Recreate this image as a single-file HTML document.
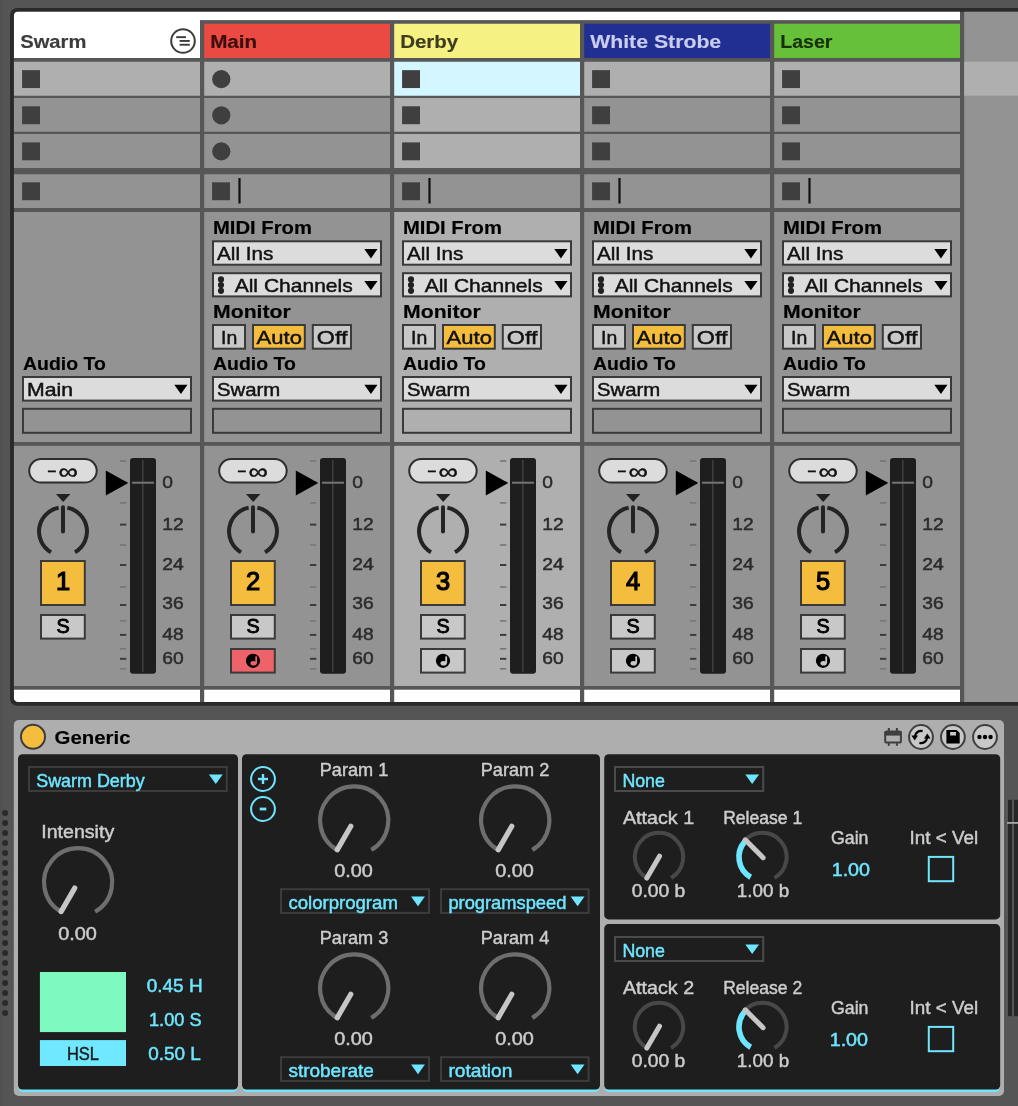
<!DOCTYPE html>
<html lang="en"><head><meta charset="utf-8"><title>Live Set</title>
<style>
html,body{margin:0;padding:0;}
body{width:1018px;height:1106px;overflow:hidden;background:#555555;}
svg{display:block;font-family:"Liberation Sans",sans-serif;will-change:transform;}
</style></head><body>
<svg width="1018" height="1106" viewBox="0 0 1018 1106">
<rect x="0" y="0" width="3.4" height="1106" fill="#515151"/>
<rect x="10" y="8" width="1030" height="697.8" fill="#2a2a2a" rx="7"/>
<clipPath id="inner"><rect x="13.75" y="11.5" width="1030" height="690.6" rx="4.5"/></clipPath>
<g clip-path="url(#inner)">
<rect x="13.75" y="11.5" width="1010" height="690.6" fill="#575757"/>
<rect x="200" y="11.5" width="760" height="8.6" fill="#ffffff"/>
<rect x="964.2" y="11.5" width="60" height="690.6" fill="#939393"/>
<rect x="964.2" y="61.75" width="60" height="34" fill="#afafaf"/>
<rect x="13.75" y="11.5" width="186.25" height="46.5" fill="#ffffff"/>
<rect x="13.75" y="61.75" width="186.25" height="34" fill="#afafaf"/>
<rect x="13.75" y="98" width="186.25" height="33.75" fill="#939393"/>
<rect x="13.75" y="134" width="186.25" height="34" fill="#939393"/>
<rect x="13.75" y="174.25" width="186.25" height="33.75" fill="#939393"/>
<rect x="13.75" y="212" width="186.25" height="230" fill="#939393"/>
<rect x="13.75" y="445.8" width="186.25" height="240.2" fill="#939393"/>
<rect x="13.75" y="689.7" width="186.25" height="13" fill="#ffffff"/>
<rect x="204.2" y="23.75" width="185.8" height="34.25" fill="#ea4a42"/>
<rect x="204.2" y="61.75" width="185.8" height="34" fill="#afafaf"/>
<rect x="204.2" y="98" width="185.8" height="33.75" fill="#939393"/>
<rect x="204.2" y="134" width="185.8" height="34" fill="#939393"/>
<rect x="204.2" y="174.25" width="185.8" height="33.75" fill="#939393"/>
<rect x="204.2" y="212" width="185.8" height="230" fill="#939393"/>
<rect x="204.2" y="445.8" width="185.8" height="240.2" fill="#939393"/>
<rect x="204.2" y="689.7" width="185.8" height="13" fill="#ffffff"/>
<rect x="394.2" y="23.75" width="185.8" height="34.25" fill="#f5f283"/>
<rect x="394.2" y="61.75" width="185.8" height="34" fill="#d4f6ff"/>
<rect x="394.2" y="98" width="185.8" height="33.75" fill="#afafaf"/>
<rect x="394.2" y="134" width="185.8" height="34" fill="#afafaf"/>
<rect x="394.2" y="174.25" width="185.8" height="33.75" fill="#939393"/>
<rect x="394.2" y="212" width="185.8" height="230" fill="#afafaf"/>
<rect x="394.2" y="445.8" width="185.8" height="240.2" fill="#afafaf"/>
<rect x="394.2" y="689.7" width="185.8" height="13" fill="#ffffff"/>
<rect x="584.2" y="23.75" width="185.8" height="34.25" fill="#212e92"/>
<rect x="584.2" y="61.75" width="185.8" height="34" fill="#afafaf"/>
<rect x="584.2" y="98" width="185.8" height="33.75" fill="#939393"/>
<rect x="584.2" y="134" width="185.8" height="34" fill="#939393"/>
<rect x="584.2" y="174.25" width="185.8" height="33.75" fill="#939393"/>
<rect x="584.2" y="212" width="185.8" height="230" fill="#939393"/>
<rect x="584.2" y="445.8" width="185.8" height="240.2" fill="#939393"/>
<rect x="584.2" y="689.7" width="185.8" height="13" fill="#ffffff"/>
<rect x="774.2" y="23.75" width="185.8" height="34.25" fill="#66c03a"/>
<rect x="774.2" y="61.75" width="185.8" height="34" fill="#afafaf"/>
<rect x="774.2" y="98" width="185.8" height="33.75" fill="#939393"/>
<rect x="774.2" y="134" width="185.8" height="34" fill="#939393"/>
<rect x="774.2" y="174.25" width="185.8" height="33.75" fill="#939393"/>
<rect x="774.2" y="212" width="185.8" height="230" fill="#939393"/>
<rect x="774.2" y="445.8" width="185.8" height="240.2" fill="#939393"/>
<rect x="774.2" y="689.7" width="185.8" height="13" fill="#ffffff"/>
</g>
<rect x="22.1" y="70.15" width="17.9" height="17.9" fill="#3f3f3f"/>
<rect x="22.1" y="106.28" width="17.9" height="17.9" fill="#3f3f3f"/>
<rect x="22.1" y="142.4" width="17.9" height="17.9" fill="#3f3f3f"/>
<rect x="22.1" y="182.32" width="17.9" height="17.9" fill="#3f3f3f"/>
<text x="20.2" y="48" font-size="19" fill="#3c3c3c" font-weight="bold" stroke="#3c3c3c" stroke-width="0.15" textLength="66.2" lengthAdjust="spacingAndGlyphs">Swarm</text>
<circle cx="221.3" cy="79.15" r="9.1" fill="#3f3f3f"/>
<circle cx="221.3" cy="115.28" r="9.1" fill="#3f3f3f"/>
<circle cx="221.3" cy="151.4" r="9.1" fill="#3f3f3f"/>
<rect x="212.1" y="182.32" width="17.9" height="17.9" fill="#3f3f3f"/>
<rect x="238.4" y="178" width="2.2" height="25.5" fill="#111111"/>
<text x="210.2" y="48" font-size="19" fill="#3b0f0d" font-weight="bold" stroke="#3b0f0d" stroke-width="0.15" textLength="47" lengthAdjust="spacingAndGlyphs">Main</text>
<rect x="402.1" y="70.15" width="17.9" height="17.9" fill="#3f3f3f"/>
<rect x="402.1" y="106.28" width="17.9" height="17.9" fill="#3f3f3f"/>
<rect x="402.1" y="142.4" width="17.9" height="17.9" fill="#3f3f3f"/>
<rect x="402.1" y="182.32" width="17.9" height="17.9" fill="#3f3f3f"/>
<rect x="428.4" y="178" width="2.2" height="25.5" fill="#111111"/>
<text x="400.2" y="48" font-size="19" fill="#3d3c1e" font-weight="bold" stroke="#3d3c1e" stroke-width="0.15" textLength="58" lengthAdjust="spacingAndGlyphs">Derby</text>
<rect x="592.1" y="70.15" width="17.9" height="17.9" fill="#3f3f3f"/>
<rect x="592.1" y="106.28" width="17.9" height="17.9" fill="#3f3f3f"/>
<rect x="592.1" y="142.4" width="17.9" height="17.9" fill="#3f3f3f"/>
<rect x="592.1" y="182.32" width="17.9" height="17.9" fill="#3f3f3f"/>
<rect x="618.4" y="178" width="2.2" height="25.5" fill="#111111"/>
<text x="590.2" y="48" font-size="19" fill="#c9cdee" font-weight="bold" stroke="#c9cdee" stroke-width="0.15" textLength="131" lengthAdjust="spacingAndGlyphs">White Strobe</text>
<rect x="782.1" y="70.15" width="17.9" height="17.9" fill="#3f3f3f"/>
<rect x="782.1" y="106.28" width="17.9" height="17.9" fill="#3f3f3f"/>
<rect x="782.1" y="142.4" width="17.9" height="17.9" fill="#3f3f3f"/>
<rect x="782.1" y="182.32" width="17.9" height="17.9" fill="#3f3f3f"/>
<rect x="808.4" y="178" width="2.2" height="25.5" fill="#111111"/>
<text x="780.2" y="48" font-size="19" fill="#173009" font-weight="bold" stroke="#173009" stroke-width="0.15" textLength="52.2" lengthAdjust="spacingAndGlyphs">Laser</text>
<circle cx="183" cy="41" r="11.8" fill="none" stroke="#3c3c3c" stroke-width="2"/>
<rect x="176.2" y="36.2" width="9.8" height="1.9" fill="#3c3c3c"/>
<rect x="179.6" y="40" width="10.2" height="1.9" fill="#3c3c3c"/>
<rect x="179.6" y="43.8" width="10.2" height="1.9" fill="#3c3c3c"/>
<text x="23" y="369.7" font-size="18.6" fill="#000000" font-weight="bold" stroke="#000000" stroke-width="0.15" textLength="82.8" lengthAdjust="spacingAndGlyphs">Audio To</text>
<rect x="23" y="377" width="168" height="23.6" fill="#dcdcdc" stroke="#3a3a3a" stroke-width="2"/>
<text x="27" y="395.6" font-size="18.4" fill="#111" stroke="#111" stroke-width="0.45" textLength="46" lengthAdjust="spacingAndGlyphs">Main</text>
<path d="M174.3 384.7h13.2l-6.6 9.4z" fill="#000"/>
<rect x="23" y="408.8" width="168" height="24" fill="none" stroke="#3a3a3a" stroke-width="2"/>
<text x="213" y="233.7" font-size="18.6" fill="#000000" font-weight="bold" stroke="#000000" stroke-width="0.15" textLength="99" lengthAdjust="spacingAndGlyphs">MIDI From</text>
<rect x="213" y="241.3" width="168" height="23.4" fill="#dcdcdc" stroke="#3a3a3a" stroke-width="2"/>
<text x="217" y="259.9" font-size="18.4" fill="#111" stroke="#111" stroke-width="0.45" textLength="56.4" lengthAdjust="spacingAndGlyphs">All Ins</text>
<path d="M364.3 249h13.2l-6.6 9.4z" fill="#000"/>
<rect x="213" y="273.2" width="168" height="23.2" fill="#dcdcdc" stroke="#3a3a3a" stroke-width="2"/>
<text x="234.7" y="291.8" font-size="18.4" fill="#111" stroke="#111" stroke-width="0.45" textLength="118" lengthAdjust="spacingAndGlyphs">All Channels</text>
<path d="M364.3 280.9h13.2l-6.6 9.4z" fill="#000"/>
<circle cx="221" cy="279.4" r="3.1" fill="#222"/>
<circle cx="221" cy="285.1" r="3.1" fill="#222"/>
<circle cx="221" cy="290.8" r="3.1" fill="#222"/>
<text x="213" y="317.7" font-size="18.6" fill="#000000" font-weight="bold" stroke="#000000" stroke-width="0.15" textLength="77.8" lengthAdjust="spacingAndGlyphs">Monitor</text>
<rect x="213" y="325" width="32" height="23.7" fill="#c8c8c8" stroke="#3a3a3a" stroke-width="2"/>
<rect x="253" y="325" width="51.8" height="23.7" fill="#f5bd3e" stroke="#3a3a3a" stroke-width="2"/>
<rect x="312.8" y="325" width="38.2" height="23.7" fill="#c8c8c8" stroke="#3a3a3a" stroke-width="2"/>
<text x="221" y="343.5" font-size="18.5" fill="#111" stroke="#111" stroke-width="0.45" textLength="16.2" lengthAdjust="spacingAndGlyphs">In</text>
<text x="256.6" y="343.5" font-size="18.5" fill="#111" stroke="#111" stroke-width="0.45" textLength="45.4" lengthAdjust="spacingAndGlyphs">Auto</text>
<text x="316.8" y="343.5" font-size="18.5" fill="#111" stroke="#111" stroke-width="0.45" textLength="30.6" lengthAdjust="spacingAndGlyphs">Off</text>
<text x="213" y="369.7" font-size="18.6" fill="#000000" font-weight="bold" stroke="#000000" stroke-width="0.15" textLength="82.8" lengthAdjust="spacingAndGlyphs">Audio To</text>
<rect x="213" y="377" width="168" height="23.6" fill="#dcdcdc" stroke="#3a3a3a" stroke-width="2"/>
<text x="217" y="395.6" font-size="18.4" fill="#111" stroke="#111" stroke-width="0.45" textLength="63.3" lengthAdjust="spacingAndGlyphs">Swarm</text>
<path d="M364.3 384.7h13.2l-6.6 9.4z" fill="#000"/>
<rect x="213" y="408.8" width="168" height="24" fill="none" stroke="#3a3a3a" stroke-width="2"/>
<text x="403" y="233.7" font-size="18.6" fill="#000000" font-weight="bold" stroke="#000000" stroke-width="0.15" textLength="99" lengthAdjust="spacingAndGlyphs">MIDI From</text>
<rect x="403" y="241.3" width="168" height="23.4" fill="#dcdcdc" stroke="#3a3a3a" stroke-width="2"/>
<text x="407" y="259.9" font-size="18.4" fill="#111" stroke="#111" stroke-width="0.45" textLength="56.4" lengthAdjust="spacingAndGlyphs">All Ins</text>
<path d="M554.3 249h13.2l-6.6 9.4z" fill="#000"/>
<rect x="403" y="273.2" width="168" height="23.2" fill="#dcdcdc" stroke="#3a3a3a" stroke-width="2"/>
<text x="424.7" y="291.8" font-size="18.4" fill="#111" stroke="#111" stroke-width="0.45" textLength="118" lengthAdjust="spacingAndGlyphs">All Channels</text>
<path d="M554.3 280.9h13.2l-6.6 9.4z" fill="#000"/>
<circle cx="411" cy="279.4" r="3.1" fill="#222"/>
<circle cx="411" cy="285.1" r="3.1" fill="#222"/>
<circle cx="411" cy="290.8" r="3.1" fill="#222"/>
<text x="403" y="317.7" font-size="18.6" fill="#000000" font-weight="bold" stroke="#000000" stroke-width="0.15" textLength="77.8" lengthAdjust="spacingAndGlyphs">Monitor</text>
<rect x="403" y="325" width="32" height="23.7" fill="#c8c8c8" stroke="#3a3a3a" stroke-width="2"/>
<rect x="443" y="325" width="51.8" height="23.7" fill="#f5bd3e" stroke="#3a3a3a" stroke-width="2"/>
<rect x="502.8" y="325" width="38.2" height="23.7" fill="#c8c8c8" stroke="#3a3a3a" stroke-width="2"/>
<text x="411" y="343.5" font-size="18.5" fill="#111" stroke="#111" stroke-width="0.45" textLength="16.2" lengthAdjust="spacingAndGlyphs">In</text>
<text x="446.6" y="343.5" font-size="18.5" fill="#111" stroke="#111" stroke-width="0.45" textLength="45.4" lengthAdjust="spacingAndGlyphs">Auto</text>
<text x="506.8" y="343.5" font-size="18.5" fill="#111" stroke="#111" stroke-width="0.45" textLength="30.6" lengthAdjust="spacingAndGlyphs">Off</text>
<text x="403" y="369.7" font-size="18.6" fill="#000000" font-weight="bold" stroke="#000000" stroke-width="0.15" textLength="82.8" lengthAdjust="spacingAndGlyphs">Audio To</text>
<rect x="403" y="377" width="168" height="23.6" fill="#dcdcdc" stroke="#3a3a3a" stroke-width="2"/>
<text x="407" y="395.6" font-size="18.4" fill="#111" stroke="#111" stroke-width="0.45" textLength="63.3" lengthAdjust="spacingAndGlyphs">Swarm</text>
<path d="M554.3 384.7h13.2l-6.6 9.4z" fill="#000"/>
<rect x="403" y="408.8" width="168" height="24" fill="none" stroke="#3a3a3a" stroke-width="2"/>
<text x="593" y="233.7" font-size="18.6" fill="#000000" font-weight="bold" stroke="#000000" stroke-width="0.15" textLength="99" lengthAdjust="spacingAndGlyphs">MIDI From</text>
<rect x="593" y="241.3" width="168" height="23.4" fill="#dcdcdc" stroke="#3a3a3a" stroke-width="2"/>
<text x="597" y="259.9" font-size="18.4" fill="#111" stroke="#111" stroke-width="0.45" textLength="56.4" lengthAdjust="spacingAndGlyphs">All Ins</text>
<path d="M744.3 249h13.2l-6.6 9.4z" fill="#000"/>
<rect x="593" y="273.2" width="168" height="23.2" fill="#dcdcdc" stroke="#3a3a3a" stroke-width="2"/>
<text x="614.7" y="291.8" font-size="18.4" fill="#111" stroke="#111" stroke-width="0.45" textLength="118" lengthAdjust="spacingAndGlyphs">All Channels</text>
<path d="M744.3 280.9h13.2l-6.6 9.4z" fill="#000"/>
<circle cx="601" cy="279.4" r="3.1" fill="#222"/>
<circle cx="601" cy="285.1" r="3.1" fill="#222"/>
<circle cx="601" cy="290.8" r="3.1" fill="#222"/>
<text x="593" y="317.7" font-size="18.6" fill="#000000" font-weight="bold" stroke="#000000" stroke-width="0.15" textLength="77.8" lengthAdjust="spacingAndGlyphs">Monitor</text>
<rect x="593" y="325" width="32" height="23.7" fill="#c8c8c8" stroke="#3a3a3a" stroke-width="2"/>
<rect x="633" y="325" width="51.8" height="23.7" fill="#f5bd3e" stroke="#3a3a3a" stroke-width="2"/>
<rect x="692.8" y="325" width="38.2" height="23.7" fill="#c8c8c8" stroke="#3a3a3a" stroke-width="2"/>
<text x="601" y="343.5" font-size="18.5" fill="#111" stroke="#111" stroke-width="0.45" textLength="16.2" lengthAdjust="spacingAndGlyphs">In</text>
<text x="636.6" y="343.5" font-size="18.5" fill="#111" stroke="#111" stroke-width="0.45" textLength="45.4" lengthAdjust="spacingAndGlyphs">Auto</text>
<text x="696.8" y="343.5" font-size="18.5" fill="#111" stroke="#111" stroke-width="0.45" textLength="30.6" lengthAdjust="spacingAndGlyphs">Off</text>
<text x="593" y="369.7" font-size="18.6" fill="#000000" font-weight="bold" stroke="#000000" stroke-width="0.15" textLength="82.8" lengthAdjust="spacingAndGlyphs">Audio To</text>
<rect x="593" y="377" width="168" height="23.6" fill="#dcdcdc" stroke="#3a3a3a" stroke-width="2"/>
<text x="597" y="395.6" font-size="18.4" fill="#111" stroke="#111" stroke-width="0.45" textLength="63.3" lengthAdjust="spacingAndGlyphs">Swarm</text>
<path d="M744.3 384.7h13.2l-6.6 9.4z" fill="#000"/>
<rect x="593" y="408.8" width="168" height="24" fill="none" stroke="#3a3a3a" stroke-width="2"/>
<text x="783" y="233.7" font-size="18.6" fill="#000000" font-weight="bold" stroke="#000000" stroke-width="0.15" textLength="99" lengthAdjust="spacingAndGlyphs">MIDI From</text>
<rect x="783" y="241.3" width="168" height="23.4" fill="#dcdcdc" stroke="#3a3a3a" stroke-width="2"/>
<text x="787" y="259.9" font-size="18.4" fill="#111" stroke="#111" stroke-width="0.45" textLength="56.4" lengthAdjust="spacingAndGlyphs">All Ins</text>
<path d="M934.3 249h13.2l-6.6 9.4z" fill="#000"/>
<rect x="783" y="273.2" width="168" height="23.2" fill="#dcdcdc" stroke="#3a3a3a" stroke-width="2"/>
<text x="804.7" y="291.8" font-size="18.4" fill="#111" stroke="#111" stroke-width="0.45" textLength="118" lengthAdjust="spacingAndGlyphs">All Channels</text>
<path d="M934.3 280.9h13.2l-6.6 9.4z" fill="#000"/>
<circle cx="791" cy="279.4" r="3.1" fill="#222"/>
<circle cx="791" cy="285.1" r="3.1" fill="#222"/>
<circle cx="791" cy="290.8" r="3.1" fill="#222"/>
<text x="783" y="317.7" font-size="18.6" fill="#000000" font-weight="bold" stroke="#000000" stroke-width="0.15" textLength="77.8" lengthAdjust="spacingAndGlyphs">Monitor</text>
<rect x="783" y="325" width="32" height="23.7" fill="#c8c8c8" stroke="#3a3a3a" stroke-width="2"/>
<rect x="823" y="325" width="51.8" height="23.7" fill="#f5bd3e" stroke="#3a3a3a" stroke-width="2"/>
<rect x="882.8" y="325" width="38.2" height="23.7" fill="#c8c8c8" stroke="#3a3a3a" stroke-width="2"/>
<text x="791" y="343.5" font-size="18.5" fill="#111" stroke="#111" stroke-width="0.45" textLength="16.2" lengthAdjust="spacingAndGlyphs">In</text>
<text x="826.6" y="343.5" font-size="18.5" fill="#111" stroke="#111" stroke-width="0.45" textLength="45.4" lengthAdjust="spacingAndGlyphs">Auto</text>
<text x="886.8" y="343.5" font-size="18.5" fill="#111" stroke="#111" stroke-width="0.45" textLength="30.6" lengthAdjust="spacingAndGlyphs">Off</text>
<text x="783" y="369.7" font-size="18.6" fill="#000000" font-weight="bold" stroke="#000000" stroke-width="0.15" textLength="82.8" lengthAdjust="spacingAndGlyphs">Audio To</text>
<rect x="783" y="377" width="168" height="23.6" fill="#dcdcdc" stroke="#3a3a3a" stroke-width="2"/>
<text x="787" y="395.6" font-size="18.4" fill="#111" stroke="#111" stroke-width="0.45" textLength="63.3" lengthAdjust="spacingAndGlyphs">Swarm</text>
<path d="M934.3 384.7h13.2l-6.6 9.4z" fill="#000"/>
<rect x="783" y="408.8" width="168" height="24" fill="none" stroke="#3a3a3a" stroke-width="2"/>
<rect x="29.2" y="459" width="67.5" height="23.6" fill="#dcdcdc" rx="12" stroke="#2d2d2d" stroke-width="2"/>
<text x="47.2" y="477.6" font-size="20" fill="#111" stroke="#111" stroke-width="0.45" textLength="9.2" lengthAdjust="spacingAndGlyphs">−</text>
<text x="58.6" y="478.6" font-size="22" fill="#111" stroke="#111" stroke-width="0.45" textLength="19.4" lengthAdjust="spacingAndGlyphs">∞</text>
<path d="M56 494h14.4l-7.2 8z" fill="#222"/>
<path d="M51 552.18A24 24 0 0 1 58.63 507.8" fill="none" stroke="#242424" stroke-width="4"/>
<path d="M67.37 507.8A24 24 0 0 1 75 552.18" fill="none" stroke="#242424" stroke-width="4"/>
<line x1="63" y1="507.2" x2="63" y2="531.6" stroke="#242424" stroke-width="4" stroke-linecap="round"/>
<rect x="41" y="561" width="43.8" height="44" fill="#f5bd3e" stroke="#3a3a3a" stroke-width="2"/>
<text x="63" y="590.2" font-size="25.5" fill="#000" text-anchor="middle" stroke="#000" stroke-width="1.2">1</text>
<rect x="41" y="615" width="43.8" height="23.6" fill="#c8c8c8" stroke="#3a3a3a" stroke-width="2"/>
<text x="63" y="633.4" font-size="19.8" fill="#000" text-anchor="middle" stroke="#000" stroke-width="0.9">S</text>
<rect x="130" y="458" width="26" height="215.8" fill="#1e1e1e" rx="3"/>
<rect x="142" y="460" width="1.6" height="212" fill="#3e3e3e"/>
<rect x="132" y="481.7" width="22" height="2" fill="#757575"/>
<rect x="120" y="460.2" width="6.3" height="1.6" fill="#777777"/>
<rect x="120" y="502.1" width="6.3" height="1.6" fill="#777777"/>
<rect x="120" y="544.2" width="6.3" height="1.6" fill="#777777"/>
<rect x="120" y="586.2" width="6.3" height="1.6" fill="#777777"/>
<rect x="120" y="620.1" width="6.3" height="1.6" fill="#777777"/>
<rect x="120" y="648" width="6.3" height="1.6" fill="#777777"/>
<rect x="120" y="668" width="6.3" height="1.6" fill="#777777"/>
<rect x="120" y="481.6" width="6.3" height="2" fill="#3c3c3c"/>
<rect x="120" y="523.6" width="6.3" height="2" fill="#3c3c3c"/>
<rect x="120" y="564" width="6.3" height="2" fill="#3c3c3c"/>
<rect x="120" y="604" width="6.3" height="2" fill="#3c3c3c"/>
<rect x="120" y="633.9" width="6.3" height="2" fill="#3c3c3c"/>
<rect x="120" y="657.8" width="6.3" height="2" fill="#3c3c3c"/>
<path d="M105.8 470.4L128.3 482.9L105.8 495.4z" fill="#000"/>
<text x="162.2" y="487.6" font-size="16.4" fill="#2b2b2b" stroke="#2b2b2b" stroke-width="0.45" textLength="10.7" lengthAdjust="spacingAndGlyphs">0</text>
<text x="162.2" y="529.7" font-size="16.4" fill="#2b2b2b" stroke="#2b2b2b" stroke-width="0.45" textLength="21.4" lengthAdjust="spacingAndGlyphs">12</text>
<text x="162.2" y="569.9" font-size="16.4" fill="#2b2b2b" stroke="#2b2b2b" stroke-width="0.45" textLength="21.4" lengthAdjust="spacingAndGlyphs">24</text>
<text x="162.2" y="609.3" font-size="16.4" fill="#2b2b2b" stroke="#2b2b2b" stroke-width="0.45" textLength="21.4" lengthAdjust="spacingAndGlyphs">36</text>
<text x="162.2" y="639.5" font-size="16.4" fill="#2b2b2b" stroke="#2b2b2b" stroke-width="0.45" textLength="21.4" lengthAdjust="spacingAndGlyphs">48</text>
<text x="162.2" y="663.5" font-size="16.4" fill="#2b2b2b" stroke="#2b2b2b" stroke-width="0.45" textLength="21.4" lengthAdjust="spacingAndGlyphs">60</text>
<rect x="219.2" y="459" width="67.5" height="23.6" fill="#dcdcdc" rx="12" stroke="#2d2d2d" stroke-width="2"/>
<text x="237.2" y="477.6" font-size="20" fill="#111" stroke="#111" stroke-width="0.45" textLength="9.2" lengthAdjust="spacingAndGlyphs">−</text>
<text x="248.6" y="478.6" font-size="22" fill="#111" stroke="#111" stroke-width="0.45" textLength="19.4" lengthAdjust="spacingAndGlyphs">∞</text>
<path d="M246 494h14.4l-7.2 8z" fill="#222"/>
<path d="M241 552.18A24 24 0 0 1 248.63 507.8" fill="none" stroke="#242424" stroke-width="4"/>
<path d="M257.37 507.8A24 24 0 0 1 265 552.18" fill="none" stroke="#242424" stroke-width="4"/>
<line x1="253" y1="507.2" x2="253" y2="531.6" stroke="#242424" stroke-width="4" stroke-linecap="round"/>
<rect x="231" y="561" width="43.8" height="44" fill="#f5bd3e" stroke="#3a3a3a" stroke-width="2"/>
<text x="253" y="590.2" font-size="25.5" fill="#000" text-anchor="middle" stroke="#000" stroke-width="1.2">2</text>
<rect x="231" y="615" width="43.8" height="23.6" fill="#c8c8c8" stroke="#3a3a3a" stroke-width="2"/>
<text x="253" y="633.4" font-size="19.8" fill="#000" text-anchor="middle" stroke="#000" stroke-width="0.9">S</text>
<rect x="231" y="649" width="43.8" height="23.6" fill="#ee6369" stroke="#3a3a3a" stroke-width="2"/>
<circle cx="253" cy="660.8" r="7.1" fill="#000"/>
<path d="M256.2 656.4v6.8" fill="none" stroke="#ee6369" stroke-width="1.8"/>
<ellipse cx="253.6" cy="663.3" rx="3.1" ry="2.3" fill="#ee6369"/>
<rect x="320" y="458" width="26" height="215.8" fill="#1e1e1e" rx="3"/>
<rect x="332" y="460" width="1.6" height="212" fill="#3e3e3e"/>
<rect x="322" y="481.7" width="22" height="2" fill="#757575"/>
<rect x="310" y="460.2" width="6.3" height="1.6" fill="#777777"/>
<rect x="310" y="502.1" width="6.3" height="1.6" fill="#777777"/>
<rect x="310" y="544.2" width="6.3" height="1.6" fill="#777777"/>
<rect x="310" y="586.2" width="6.3" height="1.6" fill="#777777"/>
<rect x="310" y="620.1" width="6.3" height="1.6" fill="#777777"/>
<rect x="310" y="648" width="6.3" height="1.6" fill="#777777"/>
<rect x="310" y="668" width="6.3" height="1.6" fill="#777777"/>
<rect x="310" y="481.6" width="6.3" height="2" fill="#3c3c3c"/>
<rect x="310" y="523.6" width="6.3" height="2" fill="#3c3c3c"/>
<rect x="310" y="564" width="6.3" height="2" fill="#3c3c3c"/>
<rect x="310" y="604" width="6.3" height="2" fill="#3c3c3c"/>
<rect x="310" y="633.9" width="6.3" height="2" fill="#3c3c3c"/>
<rect x="310" y="657.8" width="6.3" height="2" fill="#3c3c3c"/>
<path d="M295.8 470.4L318.3 482.9L295.8 495.4z" fill="#000"/>
<text x="352.2" y="487.6" font-size="16.4" fill="#2b2b2b" stroke="#2b2b2b" stroke-width="0.45" textLength="10.7" lengthAdjust="spacingAndGlyphs">0</text>
<text x="352.2" y="529.7" font-size="16.4" fill="#2b2b2b" stroke="#2b2b2b" stroke-width="0.45" textLength="21.4" lengthAdjust="spacingAndGlyphs">12</text>
<text x="352.2" y="569.9" font-size="16.4" fill="#2b2b2b" stroke="#2b2b2b" stroke-width="0.45" textLength="21.4" lengthAdjust="spacingAndGlyphs">24</text>
<text x="352.2" y="609.3" font-size="16.4" fill="#2b2b2b" stroke="#2b2b2b" stroke-width="0.45" textLength="21.4" lengthAdjust="spacingAndGlyphs">36</text>
<text x="352.2" y="639.5" font-size="16.4" fill="#2b2b2b" stroke="#2b2b2b" stroke-width="0.45" textLength="21.4" lengthAdjust="spacingAndGlyphs">48</text>
<text x="352.2" y="663.5" font-size="16.4" fill="#2b2b2b" stroke="#2b2b2b" stroke-width="0.45" textLength="21.4" lengthAdjust="spacingAndGlyphs">60</text>
<rect x="409.2" y="459" width="67.5" height="23.6" fill="#dcdcdc" rx="12" stroke="#2d2d2d" stroke-width="2"/>
<text x="427.2" y="477.6" font-size="20" fill="#111" stroke="#111" stroke-width="0.45" textLength="9.2" lengthAdjust="spacingAndGlyphs">−</text>
<text x="438.6" y="478.6" font-size="22" fill="#111" stroke="#111" stroke-width="0.45" textLength="19.4" lengthAdjust="spacingAndGlyphs">∞</text>
<path d="M436 494h14.4l-7.2 8z" fill="#222"/>
<path d="M431 552.18A24 24 0 0 1 438.63 507.8" fill="none" stroke="#242424" stroke-width="4"/>
<path d="M447.37 507.8A24 24 0 0 1 455 552.18" fill="none" stroke="#242424" stroke-width="4"/>
<line x1="443" y1="507.2" x2="443" y2="531.6" stroke="#242424" stroke-width="4" stroke-linecap="round"/>
<rect x="421" y="561" width="43.8" height="44" fill="#f5bd3e" stroke="#3a3a3a" stroke-width="2"/>
<text x="443" y="590.2" font-size="25.5" fill="#000" text-anchor="middle" stroke="#000" stroke-width="1.2">3</text>
<rect x="421" y="615" width="43.8" height="23.6" fill="#c8c8c8" stroke="#3a3a3a" stroke-width="2"/>
<text x="443" y="633.4" font-size="19.8" fill="#000" text-anchor="middle" stroke="#000" stroke-width="0.9">S</text>
<rect x="421" y="649" width="43.8" height="23.6" fill="#c8c8c8" stroke="#3a3a3a" stroke-width="2"/>
<circle cx="443" cy="660.8" r="7.1" fill="#000"/>
<path d="M446.2 656.4v6.8" fill="none" stroke="#c8c8c8" stroke-width="1.8"/>
<ellipse cx="443.6" cy="663.3" rx="3.1" ry="2.3" fill="#c8c8c8"/>
<rect x="510" y="458" width="26" height="215.8" fill="#1e1e1e" rx="3"/>
<rect x="522" y="460" width="1.6" height="212" fill="#3e3e3e"/>
<rect x="512" y="481.7" width="22" height="2" fill="#757575"/>
<rect x="500" y="460.2" width="6.3" height="1.6" fill="#777777"/>
<rect x="500" y="502.1" width="6.3" height="1.6" fill="#777777"/>
<rect x="500" y="544.2" width="6.3" height="1.6" fill="#777777"/>
<rect x="500" y="586.2" width="6.3" height="1.6" fill="#777777"/>
<rect x="500" y="620.1" width="6.3" height="1.6" fill="#777777"/>
<rect x="500" y="648" width="6.3" height="1.6" fill="#777777"/>
<rect x="500" y="668" width="6.3" height="1.6" fill="#777777"/>
<rect x="500" y="481.6" width="6.3" height="2" fill="#3c3c3c"/>
<rect x="500" y="523.6" width="6.3" height="2" fill="#3c3c3c"/>
<rect x="500" y="564" width="6.3" height="2" fill="#3c3c3c"/>
<rect x="500" y="604" width="6.3" height="2" fill="#3c3c3c"/>
<rect x="500" y="633.9" width="6.3" height="2" fill="#3c3c3c"/>
<rect x="500" y="657.8" width="6.3" height="2" fill="#3c3c3c"/>
<path d="M485.8 470.4L508.3 482.9L485.8 495.4z" fill="#000"/>
<text x="542.2" y="487.6" font-size="16.4" fill="#2b2b2b" stroke="#2b2b2b" stroke-width="0.45" textLength="10.7" lengthAdjust="spacingAndGlyphs">0</text>
<text x="542.2" y="529.7" font-size="16.4" fill="#2b2b2b" stroke="#2b2b2b" stroke-width="0.45" textLength="21.4" lengthAdjust="spacingAndGlyphs">12</text>
<text x="542.2" y="569.9" font-size="16.4" fill="#2b2b2b" stroke="#2b2b2b" stroke-width="0.45" textLength="21.4" lengthAdjust="spacingAndGlyphs">24</text>
<text x="542.2" y="609.3" font-size="16.4" fill="#2b2b2b" stroke="#2b2b2b" stroke-width="0.45" textLength="21.4" lengthAdjust="spacingAndGlyphs">36</text>
<text x="542.2" y="639.5" font-size="16.4" fill="#2b2b2b" stroke="#2b2b2b" stroke-width="0.45" textLength="21.4" lengthAdjust="spacingAndGlyphs">48</text>
<text x="542.2" y="663.5" font-size="16.4" fill="#2b2b2b" stroke="#2b2b2b" stroke-width="0.45" textLength="21.4" lengthAdjust="spacingAndGlyphs">60</text>
<rect x="599.2" y="459" width="67.5" height="23.6" fill="#dcdcdc" rx="12" stroke="#2d2d2d" stroke-width="2"/>
<text x="617.2" y="477.6" font-size="20" fill="#111" stroke="#111" stroke-width="0.45" textLength="9.2" lengthAdjust="spacingAndGlyphs">−</text>
<text x="628.6" y="478.6" font-size="22" fill="#111" stroke="#111" stroke-width="0.45" textLength="19.4" lengthAdjust="spacingAndGlyphs">∞</text>
<path d="M626 494h14.4l-7.2 8z" fill="#222"/>
<path d="M621 552.18A24 24 0 0 1 628.63 507.8" fill="none" stroke="#242424" stroke-width="4"/>
<path d="M637.37 507.8A24 24 0 0 1 645 552.18" fill="none" stroke="#242424" stroke-width="4"/>
<line x1="633" y1="507.2" x2="633" y2="531.6" stroke="#242424" stroke-width="4" stroke-linecap="round"/>
<rect x="611" y="561" width="43.8" height="44" fill="#f5bd3e" stroke="#3a3a3a" stroke-width="2"/>
<text x="633" y="590.2" font-size="25.5" fill="#000" text-anchor="middle" stroke="#000" stroke-width="1.2">4</text>
<rect x="611" y="615" width="43.8" height="23.6" fill="#c8c8c8" stroke="#3a3a3a" stroke-width="2"/>
<text x="633" y="633.4" font-size="19.8" fill="#000" text-anchor="middle" stroke="#000" stroke-width="0.9">S</text>
<rect x="611" y="649" width="43.8" height="23.6" fill="#c8c8c8" stroke="#3a3a3a" stroke-width="2"/>
<circle cx="633" cy="660.8" r="7.1" fill="#000"/>
<path d="M636.2 656.4v6.8" fill="none" stroke="#c8c8c8" stroke-width="1.8"/>
<ellipse cx="633.6" cy="663.3" rx="3.1" ry="2.3" fill="#c8c8c8"/>
<rect x="700" y="458" width="26" height="215.8" fill="#1e1e1e" rx="3"/>
<rect x="712" y="460" width="1.6" height="212" fill="#3e3e3e"/>
<rect x="702" y="481.7" width="22" height="2" fill="#757575"/>
<rect x="690" y="460.2" width="6.3" height="1.6" fill="#777777"/>
<rect x="690" y="502.1" width="6.3" height="1.6" fill="#777777"/>
<rect x="690" y="544.2" width="6.3" height="1.6" fill="#777777"/>
<rect x="690" y="586.2" width="6.3" height="1.6" fill="#777777"/>
<rect x="690" y="620.1" width="6.3" height="1.6" fill="#777777"/>
<rect x="690" y="648" width="6.3" height="1.6" fill="#777777"/>
<rect x="690" y="668" width="6.3" height="1.6" fill="#777777"/>
<rect x="690" y="481.6" width="6.3" height="2" fill="#3c3c3c"/>
<rect x="690" y="523.6" width="6.3" height="2" fill="#3c3c3c"/>
<rect x="690" y="564" width="6.3" height="2" fill="#3c3c3c"/>
<rect x="690" y="604" width="6.3" height="2" fill="#3c3c3c"/>
<rect x="690" y="633.9" width="6.3" height="2" fill="#3c3c3c"/>
<rect x="690" y="657.8" width="6.3" height="2" fill="#3c3c3c"/>
<path d="M675.8 470.4L698.3 482.9L675.8 495.4z" fill="#000"/>
<text x="732.2" y="487.6" font-size="16.4" fill="#2b2b2b" stroke="#2b2b2b" stroke-width="0.45" textLength="10.7" lengthAdjust="spacingAndGlyphs">0</text>
<text x="732.2" y="529.7" font-size="16.4" fill="#2b2b2b" stroke="#2b2b2b" stroke-width="0.45" textLength="21.4" lengthAdjust="spacingAndGlyphs">12</text>
<text x="732.2" y="569.9" font-size="16.4" fill="#2b2b2b" stroke="#2b2b2b" stroke-width="0.45" textLength="21.4" lengthAdjust="spacingAndGlyphs">24</text>
<text x="732.2" y="609.3" font-size="16.4" fill="#2b2b2b" stroke="#2b2b2b" stroke-width="0.45" textLength="21.4" lengthAdjust="spacingAndGlyphs">36</text>
<text x="732.2" y="639.5" font-size="16.4" fill="#2b2b2b" stroke="#2b2b2b" stroke-width="0.45" textLength="21.4" lengthAdjust="spacingAndGlyphs">48</text>
<text x="732.2" y="663.5" font-size="16.4" fill="#2b2b2b" stroke="#2b2b2b" stroke-width="0.45" textLength="21.4" lengthAdjust="spacingAndGlyphs">60</text>
<rect x="789.2" y="459" width="67.5" height="23.6" fill="#dcdcdc" rx="12" stroke="#2d2d2d" stroke-width="2"/>
<text x="807.2" y="477.6" font-size="20" fill="#111" stroke="#111" stroke-width="0.45" textLength="9.2" lengthAdjust="spacingAndGlyphs">−</text>
<text x="818.6" y="478.6" font-size="22" fill="#111" stroke="#111" stroke-width="0.45" textLength="19.4" lengthAdjust="spacingAndGlyphs">∞</text>
<path d="M816 494h14.4l-7.2 8z" fill="#222"/>
<path d="M811 552.18A24 24 0 0 1 818.63 507.8" fill="none" stroke="#242424" stroke-width="4"/>
<path d="M827.37 507.8A24 24 0 0 1 835 552.18" fill="none" stroke="#242424" stroke-width="4"/>
<line x1="823" y1="507.2" x2="823" y2="531.6" stroke="#242424" stroke-width="4" stroke-linecap="round"/>
<rect x="801" y="561" width="43.8" height="44" fill="#f5bd3e" stroke="#3a3a3a" stroke-width="2"/>
<text x="823" y="590.2" font-size="25.5" fill="#000" text-anchor="middle" stroke="#000" stroke-width="1.2">5</text>
<rect x="801" y="615" width="43.8" height="23.6" fill="#c8c8c8" stroke="#3a3a3a" stroke-width="2"/>
<text x="823" y="633.4" font-size="19.8" fill="#000" text-anchor="middle" stroke="#000" stroke-width="0.9">S</text>
<rect x="801" y="649" width="43.8" height="23.6" fill="#c8c8c8" stroke="#3a3a3a" stroke-width="2"/>
<circle cx="823" cy="660.8" r="7.1" fill="#000"/>
<path d="M826.2 656.4v6.8" fill="none" stroke="#c8c8c8" stroke-width="1.8"/>
<ellipse cx="823.6" cy="663.3" rx="3.1" ry="2.3" fill="#c8c8c8"/>
<rect x="890" y="458" width="26" height="215.8" fill="#1e1e1e" rx="3"/>
<rect x="902" y="460" width="1.6" height="212" fill="#3e3e3e"/>
<rect x="892" y="481.7" width="22" height="2" fill="#757575"/>
<rect x="880" y="460.2" width="6.3" height="1.6" fill="#777777"/>
<rect x="880" y="502.1" width="6.3" height="1.6" fill="#777777"/>
<rect x="880" y="544.2" width="6.3" height="1.6" fill="#777777"/>
<rect x="880" y="586.2" width="6.3" height="1.6" fill="#777777"/>
<rect x="880" y="620.1" width="6.3" height="1.6" fill="#777777"/>
<rect x="880" y="648" width="6.3" height="1.6" fill="#777777"/>
<rect x="880" y="668" width="6.3" height="1.6" fill="#777777"/>
<rect x="880" y="481.6" width="6.3" height="2" fill="#3c3c3c"/>
<rect x="880" y="523.6" width="6.3" height="2" fill="#3c3c3c"/>
<rect x="880" y="564" width="6.3" height="2" fill="#3c3c3c"/>
<rect x="880" y="604" width="6.3" height="2" fill="#3c3c3c"/>
<rect x="880" y="633.9" width="6.3" height="2" fill="#3c3c3c"/>
<rect x="880" y="657.8" width="6.3" height="2" fill="#3c3c3c"/>
<path d="M865.8 470.4L888.3 482.9L865.8 495.4z" fill="#000"/>
<text x="922.2" y="487.6" font-size="16.4" fill="#2b2b2b" stroke="#2b2b2b" stroke-width="0.45" textLength="10.7" lengthAdjust="spacingAndGlyphs">0</text>
<text x="922.2" y="529.7" font-size="16.4" fill="#2b2b2b" stroke="#2b2b2b" stroke-width="0.45" textLength="21.4" lengthAdjust="spacingAndGlyphs">12</text>
<text x="922.2" y="569.9" font-size="16.4" fill="#2b2b2b" stroke="#2b2b2b" stroke-width="0.45" textLength="21.4" lengthAdjust="spacingAndGlyphs">24</text>
<text x="922.2" y="609.3" font-size="16.4" fill="#2b2b2b" stroke="#2b2b2b" stroke-width="0.45" textLength="21.4" lengthAdjust="spacingAndGlyphs">36</text>
<text x="922.2" y="639.5" font-size="16.4" fill="#2b2b2b" stroke="#2b2b2b" stroke-width="0.45" textLength="21.4" lengthAdjust="spacingAndGlyphs">48</text>
<text x="922.2" y="663.5" font-size="16.4" fill="#2b2b2b" stroke="#2b2b2b" stroke-width="0.45" textLength="21.4" lengthAdjust="spacingAndGlyphs">60</text>
<circle cx="5.1" cy="813" r="3" fill="#2a2a2a"/>
<circle cx="5.1" cy="823" r="3" fill="#2a2a2a"/>
<circle cx="5.1" cy="833" r="3" fill="#2a2a2a"/>
<circle cx="5.1" cy="843" r="3" fill="#2a2a2a"/>
<circle cx="5.1" cy="853" r="3" fill="#2a2a2a"/>
<circle cx="5.1" cy="863" r="3" fill="#2a2a2a"/>
<circle cx="5.1" cy="873" r="3" fill="#2a2a2a"/>
<circle cx="5.1" cy="883" r="3" fill="#2a2a2a"/>
<circle cx="5.1" cy="893" r="3" fill="#2a2a2a"/>
<circle cx="5.1" cy="903" r="3" fill="#2a2a2a"/>
<circle cx="5.1" cy="913" r="3" fill="#2a2a2a"/>
<circle cx="5.1" cy="923" r="3" fill="#2a2a2a"/>
<circle cx="5.1" cy="933" r="3" fill="#2a2a2a"/>
<circle cx="5.1" cy="943" r="3" fill="#2a2a2a"/>
<circle cx="5.1" cy="953" r="3" fill="#2a2a2a"/>
<circle cx="5.1" cy="963" r="3" fill="#2a2a2a"/>
<circle cx="5.1" cy="973" r="3" fill="#2a2a2a"/>
<circle cx="5.1" cy="983" r="3" fill="#2a2a2a"/>
<circle cx="5.1" cy="993" r="3" fill="#2a2a2a"/>
<circle cx="5.1" cy="1003" r="3" fill="#2a2a2a"/>
<circle cx="5.1" cy="1013" r="3" fill="#2a2a2a"/>
<rect x="13.8" y="720" width="990.2" height="376" fill="#aeaeae" rx="5"/>
<circle cx="33" cy="736.8" r="12" fill="#f5bd3e" stroke="#3c3c3c" stroke-width="2"/>
<text x="54.6" y="743.5" font-size="18.7" fill="#000" font-weight="bold" stroke="#000" stroke-width="0.15" textLength="76" lengthAdjust="spacingAndGlyphs">Generic</text>
<rect x="18.4" y="1079.5" width="219.2" height="12.5" fill="#6ee6ff" rx="4.5"/>
<rect x="18" y="754.2" width="220" height="335.3" fill="#1e1e1e" rx="4.5"/>
<rect x="29" y="767" width="197.8" height="24" fill="none" stroke="#3c3c3c" stroke-width="2"/>
<text x="36.2" y="786.7" font-size="18.6" fill="#6ee6ff" stroke="#6ee6ff" stroke-width="0.45" textLength="108.5" lengthAdjust="spacingAndGlyphs">Swarm Derby</text>
<path d="M208.9 774.4h13.8l-6.9 9.6z" fill="#6ee6ff"/>
<text x="41.2" y="838" font-size="18.8" fill="#cdcdcd" stroke="#cdcdcd" stroke-width="0.45" textLength="73" lengthAdjust="spacingAndGlyphs">Intensity</text>
<path d="M61.05 911.73A34.1 34.1 0 1 1 95.15 911.73" fill="none" stroke="#6e6e6e" stroke-width="4.2"/>
<line x1="74.7" y1="888.09" x2="61.1" y2="911.64" stroke="#c6c6c6" stroke-width="5.2" stroke-linecap="round"/>
<text x="77.5" y="939.5" font-size="18.2" fill="#cdcdcd" text-anchor="middle" stroke="#cdcdcd" stroke-width="0.45" textLength="38.7" lengthAdjust="spacingAndGlyphs">0.00</text>
<rect x="39.9" y="972" width="86.1" height="60.1" fill="#7ef9c0"/>
<rect x="39.9" y="1040.1" width="86.1" height="25.9" fill="#70e8ff"/>
<text x="83" y="1059.5" font-size="18.2" fill="#1a1a1a" text-anchor="middle" stroke="#1a1a1a" stroke-width="0.45" textLength="32.1" lengthAdjust="spacingAndGlyphs">HSL</text>
<text x="146.7" y="991.7" font-size="18.2" fill="#6ee6ff" stroke="#6ee6ff" stroke-width="0.45" textLength="55.9" lengthAdjust="spacingAndGlyphs">0.45 H</text>
<text x="149" y="1025.6" font-size="18.2" fill="#6ee6ff" stroke="#6ee6ff" stroke-width="0.45" textLength="52.6" lengthAdjust="spacingAndGlyphs">1.00 S</text>
<text x="148.2" y="1059.5" font-size="18.2" fill="#6ee6ff" stroke="#6ee6ff" stroke-width="0.45" textLength="52.6" lengthAdjust="spacingAndGlyphs">0.50 L</text>
<rect x="242.4" y="1079.5" width="357.2" height="12.5" fill="#6ee6ff" rx="4.5"/>
<rect x="242" y="754.2" width="358" height="335.3" fill="#1e1e1e" rx="4.5"/>
<circle cx="263" cy="779" r="11.9" fill="none" stroke="#6ee6ff" stroke-width="2"/>
<rect x="258" y="777.8" width="10" height="2.4" fill="#6ee6ff"/>
<rect x="261.8" y="774" width="2.4" height="10" fill="#6ee6ff"/>
<circle cx="263" cy="809" r="11.9" fill="none" stroke="#6ee6ff" stroke-width="2"/>
<rect x="259.7" y="807.6" width="6.6" height="2.8" fill="#6ee6ff"/>
<text x="354" y="776.2" font-size="18.7" fill="#cdcdcd" text-anchor="middle" stroke="#cdcdcd" stroke-width="0.45" textLength="68.6" lengthAdjust="spacingAndGlyphs">Param 1</text>
<path d="M337.15 849.93A34.1 34.1 0 1 1 371.25 849.93" fill="none" stroke="#6e6e6e" stroke-width="4.2"/>
<line x1="350.8" y1="826.29" x2="337.2" y2="849.84" stroke="#c6c6c6" stroke-width="5.2" stroke-linecap="round"/>
<text x="353.6" y="877.2" font-size="18.2" fill="#cdcdcd" text-anchor="middle" stroke="#cdcdcd" stroke-width="0.45" textLength="38.6" lengthAdjust="spacingAndGlyphs">0.00</text>
<rect x="281" y="889.2" width="148" height="23.7" fill="none" stroke="#3c3c3c" stroke-width="2"/>
<text x="288.4" y="908.9" font-size="18.6" fill="#6ee6ff" stroke="#6ee6ff" stroke-width="0.45" textLength="109.5" lengthAdjust="spacingAndGlyphs">colorprogram</text>
<path d="M411.1 896.6h13.8l-6.9 9.6z" fill="#6ee6ff"/>
<text x="515" y="776.2" font-size="18.7" fill="#cdcdcd" text-anchor="middle" stroke="#cdcdcd" stroke-width="0.45" textLength="68.6" lengthAdjust="spacingAndGlyphs">Param 2</text>
<path d="M498.15 849.93A34.1 34.1 0 1 1 532.25 849.93" fill="none" stroke="#6e6e6e" stroke-width="4.2"/>
<line x1="511.8" y1="826.29" x2="498.2" y2="849.84" stroke="#c6c6c6" stroke-width="5.2" stroke-linecap="round"/>
<text x="514.6" y="877.2" font-size="18.2" fill="#cdcdcd" text-anchor="middle" stroke="#cdcdcd" stroke-width="0.45" textLength="38.6" lengthAdjust="spacingAndGlyphs">0.00</text>
<rect x="441" y="889.2" width="147.6" height="23.7" fill="none" stroke="#3c3c3c" stroke-width="2"/>
<text x="448.4" y="908.9" font-size="18.6" fill="#6ee6ff" stroke="#6ee6ff" stroke-width="0.45" textLength="118" lengthAdjust="spacingAndGlyphs">programspeed</text>
<path d="M570.7 896.6h13.8l-6.9 9.6z" fill="#6ee6ff"/>
<text x="354" y="944.2" font-size="18.7" fill="#cdcdcd" text-anchor="middle" stroke="#cdcdcd" stroke-width="0.45" textLength="68.6" lengthAdjust="spacingAndGlyphs">Param 3</text>
<path d="M337.15 1017.93A34.1 34.1 0 1 1 371.25 1017.93" fill="none" stroke="#6e6e6e" stroke-width="4.2"/>
<line x1="350.8" y1="994.29" x2="337.2" y2="1017.84" stroke="#c6c6c6" stroke-width="5.2" stroke-linecap="round"/>
<text x="353.6" y="1045.2" font-size="18.2" fill="#cdcdcd" text-anchor="middle" stroke="#cdcdcd" stroke-width="0.45" textLength="38.6" lengthAdjust="spacingAndGlyphs">0.00</text>
<rect x="281" y="1057.2" width="148" height="23.7" fill="none" stroke="#3c3c3c" stroke-width="2"/>
<text x="288.4" y="1076.9" font-size="18.6" fill="#6ee6ff" stroke="#6ee6ff" stroke-width="0.45" textLength="85.5" lengthAdjust="spacingAndGlyphs">stroberate</text>
<path d="M411.1 1064.6h13.8l-6.9 9.6z" fill="#6ee6ff"/>
<text x="515" y="944.2" font-size="18.7" fill="#cdcdcd" text-anchor="middle" stroke="#cdcdcd" stroke-width="0.45" textLength="68.6" lengthAdjust="spacingAndGlyphs">Param 4</text>
<path d="M498.15 1017.93A34.1 34.1 0 1 1 532.25 1017.93" fill="none" stroke="#6e6e6e" stroke-width="4.2"/>
<line x1="511.8" y1="994.29" x2="498.2" y2="1017.84" stroke="#c6c6c6" stroke-width="5.2" stroke-linecap="round"/>
<text x="514.6" y="1045.2" font-size="18.2" fill="#cdcdcd" text-anchor="middle" stroke="#cdcdcd" stroke-width="0.45" textLength="38.6" lengthAdjust="spacingAndGlyphs">0.00</text>
<rect x="441" y="1057.2" width="147.6" height="23.7" fill="none" stroke="#3c3c3c" stroke-width="2"/>
<text x="448.4" y="1076.9" font-size="18.6" fill="#6ee6ff" stroke="#6ee6ff" stroke-width="0.45" textLength="64" lengthAdjust="spacingAndGlyphs">rotation</text>
<path d="M570.7 1064.6h13.8l-6.9 9.6z" fill="#6ee6ff"/>
<rect x="604.2" y="754.2" width="396" height="165.2" fill="#1e1e1e" rx="4.5"/>
<rect x="615" y="767" width="148.2" height="24" fill="none" stroke="#4b4b4b" stroke-width="2"/>
<text x="622.4" y="786.7" font-size="18.6" fill="#6ee6ff" stroke="#6ee6ff" stroke-width="0.45" textLength="42.5" lengthAdjust="spacingAndGlyphs">None</text>
<path d="M745.3 774.4h13.8l-6.9 9.6z" fill="#6ee6ff"/>
<text x="658.5" y="823.8" font-size="18.7" fill="#cdcdcd" text-anchor="middle" stroke="#cdcdcd" stroke-width="0.45" textLength="71.2" lengthAdjust="spacingAndGlyphs">Attack 1</text>
<path d="M646.9 877.96A24.2 24.2 0 1 1 671.1 877.96" fill="none" stroke="#484848" stroke-width="4"/>
<line x1="659.5" y1="856.13" x2="646.85" y2="878.04" stroke="#c6c6c6" stroke-width="5" stroke-linecap="round"/>
<text x="658.5" y="897.1" font-size="18.2" fill="#cdcdcd" text-anchor="middle" stroke="#cdcdcd" stroke-width="0.45" textLength="53.6" lengthAdjust="spacingAndGlyphs">0.00 b</text>
<text x="762.7" y="823.8" font-size="18.7" fill="#cdcdcd" text-anchor="middle" stroke="#cdcdcd" stroke-width="0.45" textLength="79" lengthAdjust="spacingAndGlyphs">Release 1</text>
<path d="M750.3 877.96A24.2 24.2 0 1 1 774.5 877.96" fill="none" stroke="#484848" stroke-width="4"/>
<path d="M750.7 877.26A23.4 23.4 0 0 1 744.74 841.65" fill="none" stroke="#6ee6ff" stroke-width="5.6"/>
<line x1="763.11" y1="857.71" x2="745.22" y2="839.82" stroke="#c6c6c6" stroke-width="5" stroke-linecap="round"/>
<text x="763" y="897.1" font-size="18.2" fill="#cdcdcd" text-anchor="middle" stroke="#cdcdcd" stroke-width="0.45" textLength="52.4" lengthAdjust="spacingAndGlyphs">1.00 b</text>
<text x="831" y="844.1" font-size="18.7" fill="#cdcdcd" stroke="#cdcdcd" stroke-width="0.45" textLength="37.5" lengthAdjust="spacingAndGlyphs">Gain</text>
<text x="831.7" y="875.8" font-size="18.2" fill="#6ee6ff" stroke="#6ee6ff" stroke-width="0.45" textLength="38.3" lengthAdjust="spacingAndGlyphs">1.00</text>
<text x="909.6" y="844.1" font-size="18.7" fill="#cdcdcd" stroke="#cdcdcd" stroke-width="0.45" textLength="68.6" lengthAdjust="spacingAndGlyphs">Int &lt; Vel</text>
<rect x="928.8" y="856.9" width="24.4" height="24.3" fill="none" stroke="#6ee6ff" stroke-width="2"/>
<rect x="604.6" y="1079.5" width="395.2" height="12.5" fill="#6ee6ff" rx="4.5"/>
<rect x="604.2" y="924.1" width="396" height="165.4" fill="#1e1e1e" rx="4.5"/>
<rect x="615" y="937" width="148.2" height="24" fill="none" stroke="#4b4b4b" stroke-width="2"/>
<text x="622.4" y="956.7" font-size="18.6" fill="#6ee6ff" stroke="#6ee6ff" stroke-width="0.45" textLength="42.5" lengthAdjust="spacingAndGlyphs">None</text>
<path d="M745.3 944.4h13.8l-6.9 9.6z" fill="#6ee6ff"/>
<text x="658.5" y="993.8" font-size="18.7" fill="#cdcdcd" text-anchor="middle" stroke="#cdcdcd" stroke-width="0.45" textLength="71.2" lengthAdjust="spacingAndGlyphs">Attack 2</text>
<path d="M646.9 1047.96A24.2 24.2 0 1 1 671.1 1047.96" fill="none" stroke="#484848" stroke-width="4"/>
<line x1="659.5" y1="1026.13" x2="646.85" y2="1048.04" stroke="#c6c6c6" stroke-width="5" stroke-linecap="round"/>
<text x="658.5" y="1067.1" font-size="18.2" fill="#cdcdcd" text-anchor="middle" stroke="#cdcdcd" stroke-width="0.45" textLength="53.6" lengthAdjust="spacingAndGlyphs">0.00 b</text>
<text x="762.7" y="993.8" font-size="18.7" fill="#cdcdcd" text-anchor="middle" stroke="#cdcdcd" stroke-width="0.45" textLength="79" lengthAdjust="spacingAndGlyphs">Release 2</text>
<path d="M750.3 1047.96A24.2 24.2 0 1 1 774.5 1047.96" fill="none" stroke="#484848" stroke-width="4"/>
<path d="M750.7 1047.26A23.4 23.4 0 0 1 744.74 1011.65" fill="none" stroke="#6ee6ff" stroke-width="5.6"/>
<line x1="763.11" y1="1027.71" x2="745.22" y2="1009.82" stroke="#c6c6c6" stroke-width="5" stroke-linecap="round"/>
<text x="763" y="1067.1" font-size="18.2" fill="#cdcdcd" text-anchor="middle" stroke="#cdcdcd" stroke-width="0.45" textLength="52.4" lengthAdjust="spacingAndGlyphs">1.00 b</text>
<text x="831" y="1014.1" font-size="18.7" fill="#cdcdcd" stroke="#cdcdcd" stroke-width="0.45" textLength="37.5" lengthAdjust="spacingAndGlyphs">Gain</text>
<text x="829.7" y="1045.8" font-size="18.2" fill="#6ee6ff" stroke="#6ee6ff" stroke-width="0.45" textLength="38.3" lengthAdjust="spacingAndGlyphs">1.00</text>
<text x="909.6" y="1014.1" font-size="18.7" fill="#cdcdcd" stroke="#cdcdcd" stroke-width="0.45" textLength="68.6" lengthAdjust="spacingAndGlyphs">Int &lt; Vel</text>
<rect x="928.8" y="1026.9" width="24.4" height="24.3" fill="none" stroke="#6ee6ff" stroke-width="2"/>
<rect x="885.2" y="731.5" width="15.7" height="11.1" fill="none" rx="1.6" stroke="#3f3f3f" stroke-width="2"/>
<rect x="884.6" y="731" width="16.9" height="4.6" fill="#3f3f3f"/>
<rect x="887.8" y="728" width="2" height="3" fill="#3f3f3f"/>
<rect x="887.8" y="743.2" width="2" height="2.6" fill="#3f3f3f"/>
<rect x="895.9" y="728" width="2" height="3" fill="#3f3f3f"/>
<rect x="895.9" y="743.2" width="2" height="2.6" fill="#3f3f3f"/>
<circle cx="921" cy="737" r="11.9" fill="#c8c8c8" stroke="#3f3f3f" stroke-width="2"/>
<circle cx="952.9" cy="737" r="11.9" fill="#c8c8c8" stroke="#3f3f3f" stroke-width="2"/>
<circle cx="985" cy="737" r="11.9" fill="#c8c8c8" stroke="#3f3f3f" stroke-width="2"/>
<circle cx="979.45" cy="737" r="2.2" fill="#000"/>
<circle cx="985" cy="737" r="2.2" fill="#000"/>
<circle cx="990.55" cy="737" r="2.2" fill="#000"/>
<path d="M946.4 729.9h10.3l3 3v10.6h-13.3z" fill="#000"/>
<rect x="950.1" y="732" width="5.9" height="3.5" fill="#c8c8c8"/>
<path d="M914.92 736.47A6.1 6.1 0 0 1 922.58 731.11" fill="none" stroke="#000" stroke-width="2.2"/>
<path d="M927.08 737.53A6.1 6.1 0 0 1 919.42 742.89" fill="none" stroke="#000" stroke-width="2.2"/>
<path d="M911.4 735.4h6.6l-3.3 5z" fill="#000"/>
<path d="M924 738.6h6.6l-3.3 -5z" fill="#000"/>
<rect x="1008" y="799.8" width="4" height="216.4" fill="#262626"/>
<rect x="1014" y="799.8" width="4" height="216.4" fill="#262626"/>
<rect x="1007" y="822" width="11" height="1.8" fill="#a8a8a8"/>
</svg>
</body></html>
